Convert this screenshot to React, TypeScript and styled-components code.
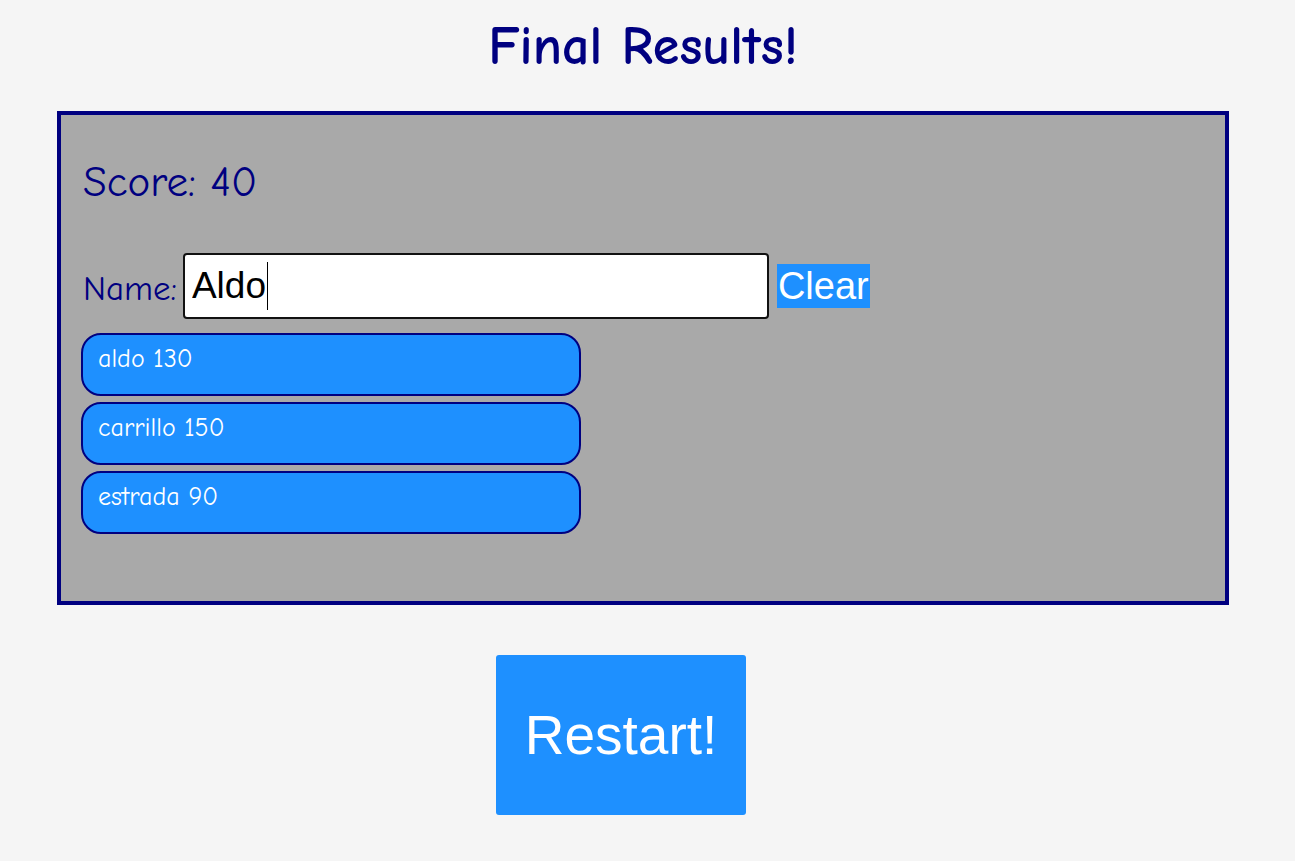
import styled, { createGlobalStyle } from 'styled-components';

const GlobalStyle = createGlobalStyle`
  html, body {
    margin: 0;
    padding: 0;
    background-color: #f5f5f5;
  }
`;

const comic = `"Comic Sans MS", "Comic Neue", Lato, "Noto Sans", sans-serif`;
const arial = `"Liberation Sans", Arial, sans-serif`;

const Page = styled.div`
  width: 1172px;
  margin-left: 57px;
  padding-bottom: 46px;
  display: flex;
  flex-direction: column;
`;

const Title = styled.h1`
  margin: 18px 0 0;
  height: 58px;
  line-height: 58px;
  text-align: center;
  font-family: ${comic};
  font-size: 54px;
  font-weight: 700;
  color: #000080;
`;

const Panel = styled.div`
  margin-top: 35px;
  height: 494px;
  box-sizing: border-box;
  border: 4px solid #000080;
  background-color: #a9a9a9;
  padding: 45px 20px 0 20px;
  display: flex;
  flex-direction: column;
`;

const Score = styled.div`
  margin-left: 2px;
  font-family: ${comic};
  font-size: 43px;
  line-height: 44px;
  color: #000080;
`;

const NameRow = styled.div`
  margin-top: 49px;
  margin-left: 2px;
  display: flex;
  align-items: center;
`;

const Label = styled.label`
  font-family: ${comic};
  font-size: 35px;
  color: #000080;
  margin-right: 6px;
  margin-top: 4px;
`;

const InputWrap = styled.div`
  position: relative;
`;

const NameInput = styled.input`
  width: 586px;
  height: 66px;
  box-sizing: border-box;
  border: 2px solid #111;
  border-radius: 4px;
  padding: 0 7px;
  font-family: ${arial};
  font-size: 37px;
  color: #000;
  background: #fff;
  outline: none;
`;

const Caret = styled.span`
  position: absolute;
  left: 84px;
  top: 9px;
  width: 1px;
  height: 48px;
  background: #000;
`;

const ClearButton = styled.button`
  margin-left: 8px;
  height: 44px;
  padding: 0 1px;
  border: none;
  border-radius: 0;
  background-color: #1e90ff;
  color: #fff;
  font-family: ${arial};
  font-size: 38px;
  line-height: 44px;
  cursor: pointer;
`;

const List = styled.ul`
  list-style: none;
  margin: 14px 0 0;
  padding: 0;
  width: 500px;
  display: flex;
  flex-direction: column;
  gap: 6px;
`;

const Entry = styled.li`
  height: 63px;
  box-sizing: border-box;
  border: 2px solid #000080;
  border-radius: 20px;
  background-color: #1e90ff;
  color: #fff;
  font-family: ${comic};
  font-size: 26px;
  line-height: 30px;
  padding: 9px 15px 0;
`;

const RestartButton = styled.button`
  margin-top: 50px;
  margin-left: 439px;
  width: 250px;
  height: 160px;
  border: none;
  border-radius: 3px;
  background-color: #1e90ff;
  color: #fff;
  font-family: ${arial};
  font-size: 55px;
  cursor: pointer;
`;

const scores = [
  { name: 'aldo', points: 130 },
  { name: 'carrillo', points: 150 },
  { name: 'estrada', points: 90 },
];

const App = () => {
  return (
    <>
      <GlobalStyle />
      <Page>
        <Title>Final Results!</Title>
        <Panel>
          <Score>Score: 40</Score>
          <NameRow>
            <Label htmlFor="name">Name:</Label>
            <InputWrap>
              <NameInput id="name" defaultValue="Aldo" />
              <Caret />
            </InputWrap>
            <ClearButton>Clear</ClearButton>
          </NameRow>
          <List>
            {scores.map((s) => (
              <Entry key={s.name}>
                {s.name} {s.points}
              </Entry>
            ))}
          </List>
        </Panel>
        <RestartButton>Restart!</RestartButton>
      </Page>
    </>
  );
};

export default App;
